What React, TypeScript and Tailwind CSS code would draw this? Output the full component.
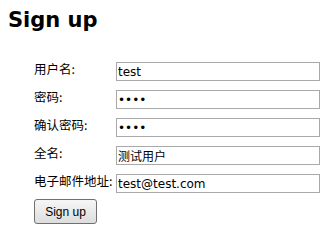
import React from 'react';

const FIELDS = [
  { label: '用户名:', type: 'text', value: 'test' },
  { label: '密码:', type: 'password', value: 'test' },
  { label: '确认密码:', type: 'password', value: 'test' },
  { label: '全名:', type: 'text', value: '测试用户' },
  { label: '电子邮件地址:', type: 'text', value: 'test@test.com' },
];

export default function App() {
  return (
    <div className="w-[330px] h-[227px] bg-white overflow-hidden text-black">
      <h1 className="pl-2 pt-[7px] text-[21px] leading-[26px] font-bold font-['DejaVu_Sans',sans-serif]">
        Sign up
      </h1>
      <form className="pl-[34px] pt-[29px]" onSubmit={(e) => e.preventDefault()}>
        <div className="grid grid-cols-[82px_204px] gap-y-[9px]">
          {FIELDS.map((f) => (
            <React.Fragment key={f.label}>
              <label className="-mt-[1px] text-[12.5px] leading-[15px] font-['Noto_Sans_CJK_SC',sans-serif] whitespace-nowrap">
                {f.label}
              </label>
              <input
                type={f.type}
                defaultValue={f.value}
                className="h-[19px] w-[204px] border border-[#a9a9a9] px-[1px] text-[12px] leading-[17px] font-['DejaVu_Sans','Noto_Sans_CJK_SC',sans-serif] outline-none"
              />
            </React.Fragment>
          ))}
        </div>
        <button
          type="submit"
          className="mt-[6px] h-[25px] w-[63px] rounded-[3px] border border-[#707070] bg-gradient-to-b from-[#f6f6f6] to-[#dddddd] text-[12px] font-['Liberation_Sans',sans-serif]"
        >
          Sign up
        </button>
      </form>
    </div>
  );
}
